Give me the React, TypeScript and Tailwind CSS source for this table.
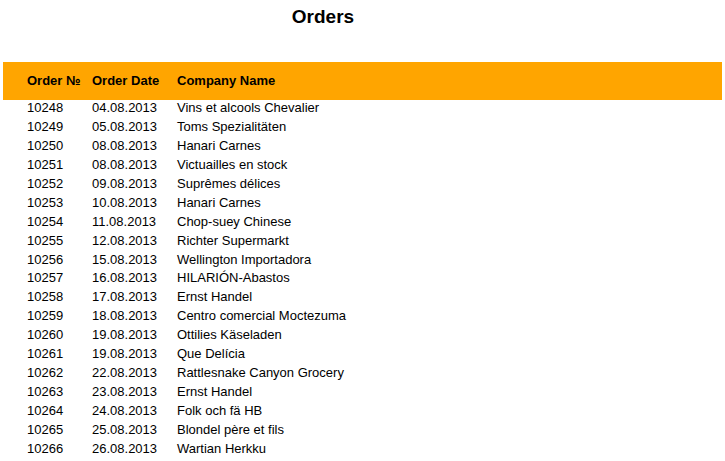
import React from 'react';

const ORDERS = [
  { id: 10248, date: '04.08.2013', company: 'Vins et alcools Chevalier' },
  { id: 10249, date: '05.08.2013', company: 'Toms Spezialitäten' },
  { id: 10250, date: '08.08.2013', company: 'Hanari Carnes' },
  { id: 10251, date: '08.08.2013', company: 'Victuailles en stock' },
  { id: 10252, date: '09.08.2013', company: 'Suprêmes délices' },
  { id: 10253, date: '10.08.2013', company: 'Hanari Carnes' },
  { id: 10254, date: '11.08.2013', company: 'Chop-suey Chinese' },
  { id: 10255, date: '12.08.2013', company: 'Richter Supermarkt' },
  { id: 10256, date: '15.08.2013', company: 'Wellington Importadora' },
  { id: 10257, date: '16.08.2013', company: 'HILARIÓN-Abastos' },
  { id: 10258, date: '17.08.2013', company: 'Ernst Handel' },
  { id: 10259, date: '18.08.2013', company: 'Centro comercial Moctezuma' },
  { id: 10260, date: '19.08.2013', company: 'Ottilies Käseladen' },
  { id: 10261, date: '19.08.2013', company: 'Que Delícia' },
  { id: 10262, date: '22.08.2013', company: 'Rattlesnake Canyon Grocery' },
  { id: 10263, date: '23.08.2013', company: 'Ernst Handel' },
  { id: 10264, date: '24.08.2013', company: 'Folk och fä HB' },
  { id: 10265, date: '25.08.2013', company: 'Blondel père et fils' },
  { id: 10266, date: '26.08.2013', company: 'Wartian Herkku' },
];

export default function App() {
  return (
    <div className="w-[725px] h-[461px] bg-white text-black overflow-hidden font-['Liberation_Sans',Arial,sans-serif]">
      {/* Report title */}
      <div className="h-[62px] w-[646px] text-center">
        <h1 className="pt-[6px] text-[19px] leading-[22px] font-bold">Orders</h1>
      </div>

      <div className="ml-[3px] w-[719px]">
        {/* Column headers */}
        <div className="h-[38px] bg-[#ffa500] flex items-center pl-[24px] text-[13px] font-bold">
          <div className="w-[65px]">Order №</div>
          <div className="w-[85px]">Order Date</div>
          <div>Company Name</div>
        </div>

        {/* Rows */}
        {ORDERS.map((order) => (
          <div key={order.id} className="h-[18.95px] flex pl-[24px] text-[13px] leading-[15px]">
            <div className="w-[65px]">{order.id}</div>
            <div className="w-[85px]">{order.date}</div>
            <div>{order.company}</div>
          </div>
        ))}
      </div>
    </div>
  );
}
